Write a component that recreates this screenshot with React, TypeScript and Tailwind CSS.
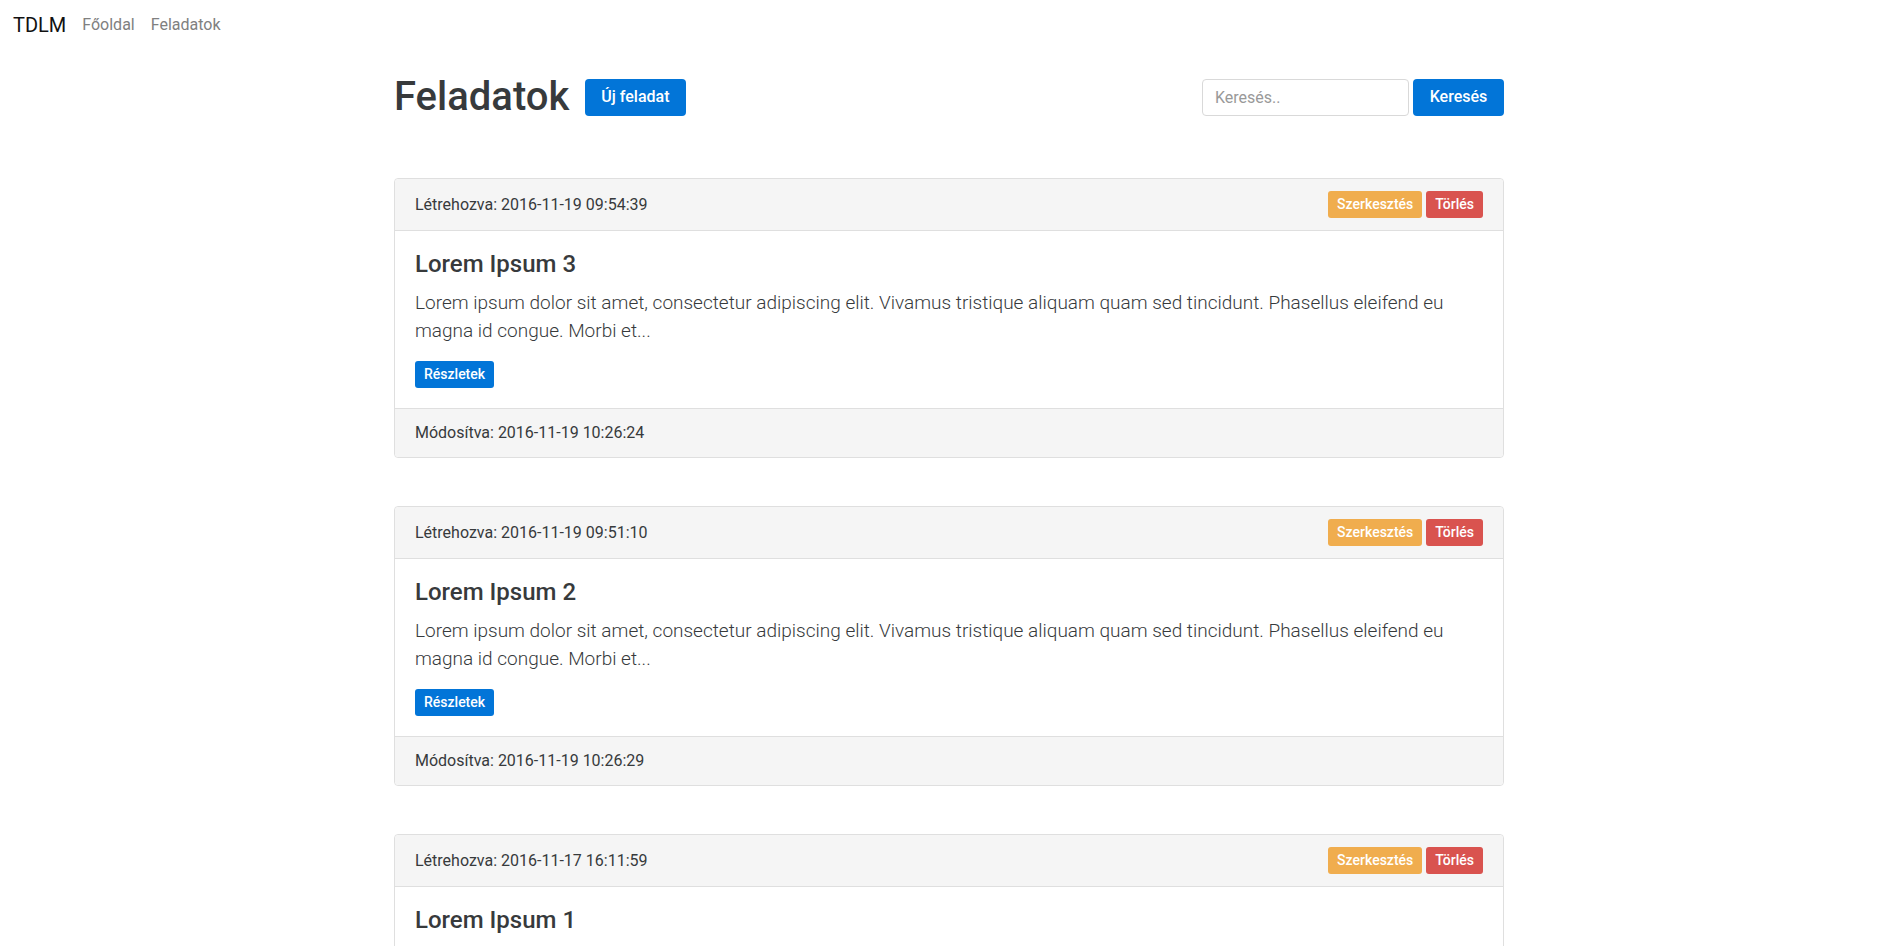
import React from 'react';

interface Task {
  id: number;
  title: string;
  created: string;
  modified: string;
  excerpt: string;
}

const excerpt =
  'Lorem ipsum dolor sit amet, consectetur adipiscing elit. Vivamus tristique aliquam quam sed tincidunt. Phasellus eleifend eu magna id congue. Morbi et...';

const tasks: Task[] = [
  { id: 3, title: 'Lorem Ipsum 3', created: '2016-11-19 09:54:39', modified: '2016-11-19 10:26:24', excerpt },
  { id: 2, title: 'Lorem Ipsum 2', created: '2016-11-19 09:51:10', modified: '2016-11-19 10:26:29', excerpt },
  { id: 1, title: 'Lorem Ipsum 1', created: '2016-11-17 16:11:59', modified: '2016-11-17 16:30:02', excerpt },
];

const TaskCard = ({ task }: { task: Task }) => (
  <div className="mb-12 rounded-[4px] border border-[#dfdfdf] bg-white">
    {/* Header */}
    <div className="flex items-center justify-between rounded-t-[4px] border-b border-[#dfdfdf] bg-[#f5f5f5] px-5 py-3">
      <span className="text-base leading-6">Létrehozva: {task.created}</span>
      <div className="flex gap-1">
        <button className="rounded-[3px] bg-[#f0ad4e] px-[9px] py-1 text-sm font-medium leading-[19px] text-white">
          Szerkesztés
        </button>
        <button className="rounded-[3px] bg-[#d9534f] px-[9px] py-1 text-sm font-medium leading-[19px] text-white">
          Törlés
        </button>
      </div>
    </div>

    {/* Body */}
    <div className="p-5">
      <h4 className="mb-3 text-2xl font-medium leading-[26px]">{task.title}</h4>
      <p className="mb-4 text-[19px] font-light leading-[28px]">{task.excerpt}</p>
      <button className="rounded-[3px] bg-[#0275d8] px-[9px] py-1 text-sm font-medium leading-[19px] text-white">
        Részletek
      </button>
    </div>

    {/* Footer */}
    <div className="rounded-b-[4px] border-t border-[#dfdfdf] bg-[#f5f5f5] px-5 py-3">
      <span className="text-base leading-6">Módosítva: {task.modified}</span>
    </div>
  </div>
);

export default function App() {
  return (
    <div className="min-h-screen bg-white text-[#373a3c]" style={{ fontFamily: 'Roboto, "Liberation Sans", sans-serif' }}>
      {/* Navbar */}
      <nav className="flex h-[50px] items-center pl-[13px]">
        <span className="text-xl leading-[30px] text-[#111]">TDLM</span>
        <a className="ml-4 text-base text-[#808080]">Főoldal</a>
        <a className="ml-4 text-base text-[#808080]">Feladatok</a>
      </nav>

      <div className="mx-auto w-[1140px] px-[15px]">
        {/* Title row */}
        <div className="mb-[59px] mt-[25px] flex items-center justify-between">
          <div className="flex items-center">
            <h1 className="text-[40px] font-medium leading-[44px]">Feladatok</h1>
            <button className="ml-4 h-[37px] rounded-[4px] bg-[#0275d8] px-4 text-base font-medium text-white">
              Új feladat
            </button>
          </div>
          <div className="flex items-center gap-1">
            <input
              placeholder="Keresés.."
              className="h-[37px] w-[207px] rounded-[4px] border border-[#d9d9d9] px-3 text-base outline-none placeholder:text-[#999]"
            />
            <button className="h-[37px] w-[91px] rounded-[4px] bg-[#0275d8] text-base font-medium text-white">
              Keresés
            </button>
          </div>
        </div>

        {tasks.map(t => (
          <TaskCard key={t.id} task={t} />
        ))}
      </div>
    </div>
  );
}
